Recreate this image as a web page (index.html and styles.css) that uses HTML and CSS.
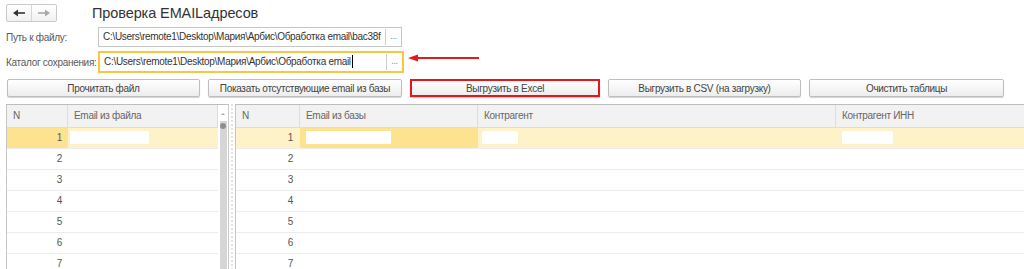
FILE: index.html
```html
<!DOCTYPE html>
<html lang="ru">
<head>
    <meta charset="UTF-8">
    <title>Проверка EMAILадресов</title>
    <link rel="stylesheet" href="styles.css">
</head>
<body>
    <div class="top">
        <div class="nav">
            <span class="nav-btn">
                <svg width="12" height="8" viewBox="0 0 12 8"><polygon points="0,4 5,0.5 5,7.5" fill="#333"/><line x1="4" y1="4" x2="12" y2="4" stroke="#333" stroke-width="1.6"/></svg>
            </span>
            <span class="nav-btn">
                <svg width="12" height="8" viewBox="0 0 12 8"><polygon points="12,4 7,0.5 7,7.5" fill="#a8a8a8"/><line x1="0" y1="4" x2="8" y2="4" stroke="#a8a8a8" stroke-width="1.6"/></svg>
            </span>
        </div>
        <h1 class="title">Проверка EMAILадресов</h1>
    </div>

    <div class="field field-first">
        <label class="field-label">Путь к файлу:</label>
        <div class="input">
            <span class="value">C:\Users\remote1\Desktop\Мария\Арбис\Обработка email\bac38f</span>
            <span class="pick">...</span>
        </div>
    </div>

    <div class="field field-second">
        <label class="field-label">Каталог сохранения:</label>
        <div class="input input-active">
            <span class="value">C:\Users\remote1\Desktop\Мария\Арбис\Обработка email<i class="caret"></i></span>
            <span class="pick">...</span>
        </div>
        <svg class="pointer" width="72" height="14" viewBox="0 0 72 14">
            <polygon points="0,5 10,1.5 10,8.5" fill="#e31b1b"/>
            <line x1="8" y1="5" x2="71" y2="5" stroke="#e31b1b" stroke-width="2"/>
        </svg>
    </div>

    <div class="buttons">
        <button class="btn btn-read">Прочитать файл</button>
        <button class="btn btn-show">Показать отсутствующие email из базы</button>
        <button class="btn btn-excel">Выгрузить в Excel</button>
        <button class="btn btn-csv">Выгрузить в CSV (на загрузку)</button>
        <button class="btn btn-clear">Очистить таблицы</button>
    </div>

    <div class="tables">
        <div class="panel-left">
            <div class="grid grid-file">
                <div class="head">
                    <div class="hcell">N</div>
                    <div class="hcell">Email из файла</div>
                </div>
                <div class="row row-current">
                    <div class="cell num cell-focus">1</div>
                    <div class="cell"><span class="mask mask-file"></span></div>
                </div>
                <div class="row"><div class="cell num">2</div><div class="cell"></div></div>
                <div class="row"><div class="cell num">3</div><div class="cell"></div></div>
                <div class="row"><div class="cell num">4</div><div class="cell"></div></div>
                <div class="row"><div class="cell num">5</div><div class="cell"></div></div>
                <div class="row"><div class="cell num">6</div><div class="cell"></div></div>
                <div class="row"><div class="cell num">7</div><div class="cell"></div></div>
            </div>
            <div class="scroll">
                <span class="scroll-up"></span>
                <span class="scroll-track"><span class="scroll-thumb"></span></span>
            </div>
        </div>

        <div class="split"></div>

        <div class="grid grid-base">
            <div class="head">
                <div class="hcell">N</div>
                <div class="hcell">Email из базы</div>
                <div class="hcell">Контрагент</div>
                <div class="hcell">Контрагент ИНН</div>
            </div>
            <div class="row row-current">
                <div class="cell num">1</div>
                <div class="cell cell-focus"><span class="mask mask-base"></span></div>
                <div class="cell"><span class="mask mask-agent"></span></div>
                <div class="cell"><span class="mask mask-inn"></span></div>
            </div>
            <div class="row"><div class="cell num">2</div><div class="cell"></div><div class="cell"></div><div class="cell"></div></div>
            <div class="row"><div class="cell num">3</div><div class="cell"></div><div class="cell"></div><div class="cell"></div></div>
            <div class="row"><div class="cell num">4</div><div class="cell"></div><div class="cell"></div><div class="cell"></div></div>
            <div class="row"><div class="cell num">5</div><div class="cell"></div><div class="cell"></div><div class="cell"></div></div>
            <div class="row"><div class="cell num">6</div><div class="cell"></div><div class="cell"></div><div class="cell"></div></div>
            <div class="row"><div class="cell num">7</div><div class="cell"></div><div class="cell"></div><div class="cell"></div></div>
        </div>
    </div>
</body>
</html>
```

FILE: styles.css
```css
* {
    margin: 0;
    padding: 0;
    box-sizing: border-box;
}
body {
    width: 1024px;
    height: 269px;
    overflow: hidden;
    background: #fff;
    font-family: "Liberation Sans", Arial, sans-serif;
    font-size: 10px;
    letter-spacing: -0.3px;
    color: #4d4d4d;
}

/* header */
.top {
    display: flex;
    align-items: center;
    height: 25px;
    padding: 4px 0 3px 6px;
}
.nav {
    display: flex;
    width: 51px;
    height: 18px;
    border: 1px solid #c9c9c9;
    border-radius: 2px;
    background: linear-gradient(#fff, #f1f1f1);
}
.nav-btn {
    flex: 1;
    display: flex;
    align-items: center;
    justify-content: center;
}
.nav-btn + .nav-btn {
    border-left: 1px solid #d6d6d6;
}
.title {
    margin-left: 35px;
    font-size: 14.5px;
    letter-spacing: -0.1px;
    font-weight: normal;
    line-height: 18px;
    color: #333;
}

/* fields */
.field {
    display: flex;
    align-items: center;
    padding-left: 6px;
}
.field-first {
    margin-top: 2px;
}
.field-second {
    margin-top: 4px;
}
.field-label {
    width: 92px;
    color: #595959;
    white-space: nowrap;
}
.input {
    display: flex;
    width: 304px;
    height: 20px;
    border: 1px solid #c6c6c6;
    background: #fff;
}
.input-active {
    width: 306px;
    height: 22px;
    border: 2px solid #f7c744;
}
.value {
    flex: 1;
    padding-left: 4px;
    line-height: 18px;
    white-space: nowrap;
    overflow: hidden;
    color: #333;
}
.caret {
    display: inline-block;
    width: 1px;
    height: 13px;
    margin-left: 1px;
    vertical-align: -3px;
    background: #000;
}
.pick {
    width: 16px;
    margin: 1px 0;
    border-left: 1px solid #cfcfcf;
    text-align: center;
    line-height: 14px;
    font-size: 9px;
    color: #888;
}
.pointer {
    margin-left: 4px;
    margin-top: -4px;
}

/* buttons */
.buttons {
    display: flex;
    gap: 8px;
    margin-top: 6px;
    padding-left: 7px;
}
.btn {
    flex-shrink: 0;
    height: 18px;
    border: 1px solid #bebebe;
    border-radius: 2px;
    background: linear-gradient(#fff, #ededed);
    box-shadow: 0 1px 1px rgba(0, 0, 0, 0.18);
    font-family: inherit;
    font-size: 10px;
    letter-spacing: -0.3px;
    color: #444;
}
.btn-read { width: 193px; }
.btn-show { width: 194px; }
.btn-excel {
    width: 190px;
    border: 2px solid #e3161b;
    border-radius: 0;
}
.btn-csv { width: 193px; }
.btn-clear { width: 195px; }

/* tables */
.tables {
    display: flex;
    margin-top: 7px;
    padding-left: 6px;
    height: 166px;
}
.panel-left {
    display: flex;
    flex-shrink: 0;
    width: 223px;
    border-top: 1px solid #bdbdbd;
    border-left: 1px solid #c6c6c6;
    border-right: 1px solid #cccccc;
}
.grid-file {
    width: 211px;
}
.grid-file .head,
.grid-file .row {
    grid-template-columns: 61px 150px;
}
.grid-base {
    flex: 1;
    min-width: 0;
    overflow: hidden;
    border-top: 1px solid #bdbdbd;
    border-left: 1px solid #c6c6c6;
}
.grid-base .head,
.grid-base .row {
    grid-template-columns: 64px 178px 358px 200px;
}
.head {
    display: grid;
    height: 23px;
    background: #f2f2f2;
    border-bottom: 1px solid #dddddd;
}
.hcell {
    padding-left: 6px;
    line-height: 22px;
    color: #666;
    border-right: 1px solid #dddddd;
    white-space: nowrap;
}
.row {
    display: grid;
    height: 21px;
    border-bottom: 1px solid #ececec;
}
.cell {
    line-height: 20px;
    padding-left: 6px;
    color: #555;
}
.num {
    text-align: right;
    padding-right: 6px;
}
.grid-base .num {
    padding-right: 7px;
}
.row-current {
    background: #fef2c9;
}
.row-current .cell-focus {
    background: #fde28f;
}
.mask {
    display: inline-block;
    height: 13px;
    margin-top: 3px;
    vertical-align: top;
    background: #fff;
}
.grid-file .mask { margin-left: -4px; }
.mask-file { width: 79px; }
.mask-base { width: 85px; }
.mask-agent { width: 36px; margin-left: -2px; }
.mask-inn { width: 51px; }

/* scrollbar */
.scroll {
    display: flex;
    flex-direction: column;
    align-items: center;
    width: 10px;
    padding-top: 8px;
}
.scroll-up {
    width: 0;
    height: 0;
    border-left: 2px solid transparent;
    border-right: 2px solid transparent;
    border-bottom: 2px solid #aaa;
}
.scroll-track {
    display: flex;
    justify-content: center;
    flex: 1;
    width: 7px;
    margin-top: 6px;
    background: #d6d6d6;
}
.scroll-thumb {
    width: 6px;
    height: 6px;
    margin-top: 2px;
    border-radius: 50%;
    background: #8f8f8f;
}

.split {
    flex-shrink: 0;
    width: 6px;
    padding-left: 2px;
}
.split::before {
    content: "";
    display: block;
    height: 100%;
    border-left: 2px dotted #e3e3e3;
}
```
